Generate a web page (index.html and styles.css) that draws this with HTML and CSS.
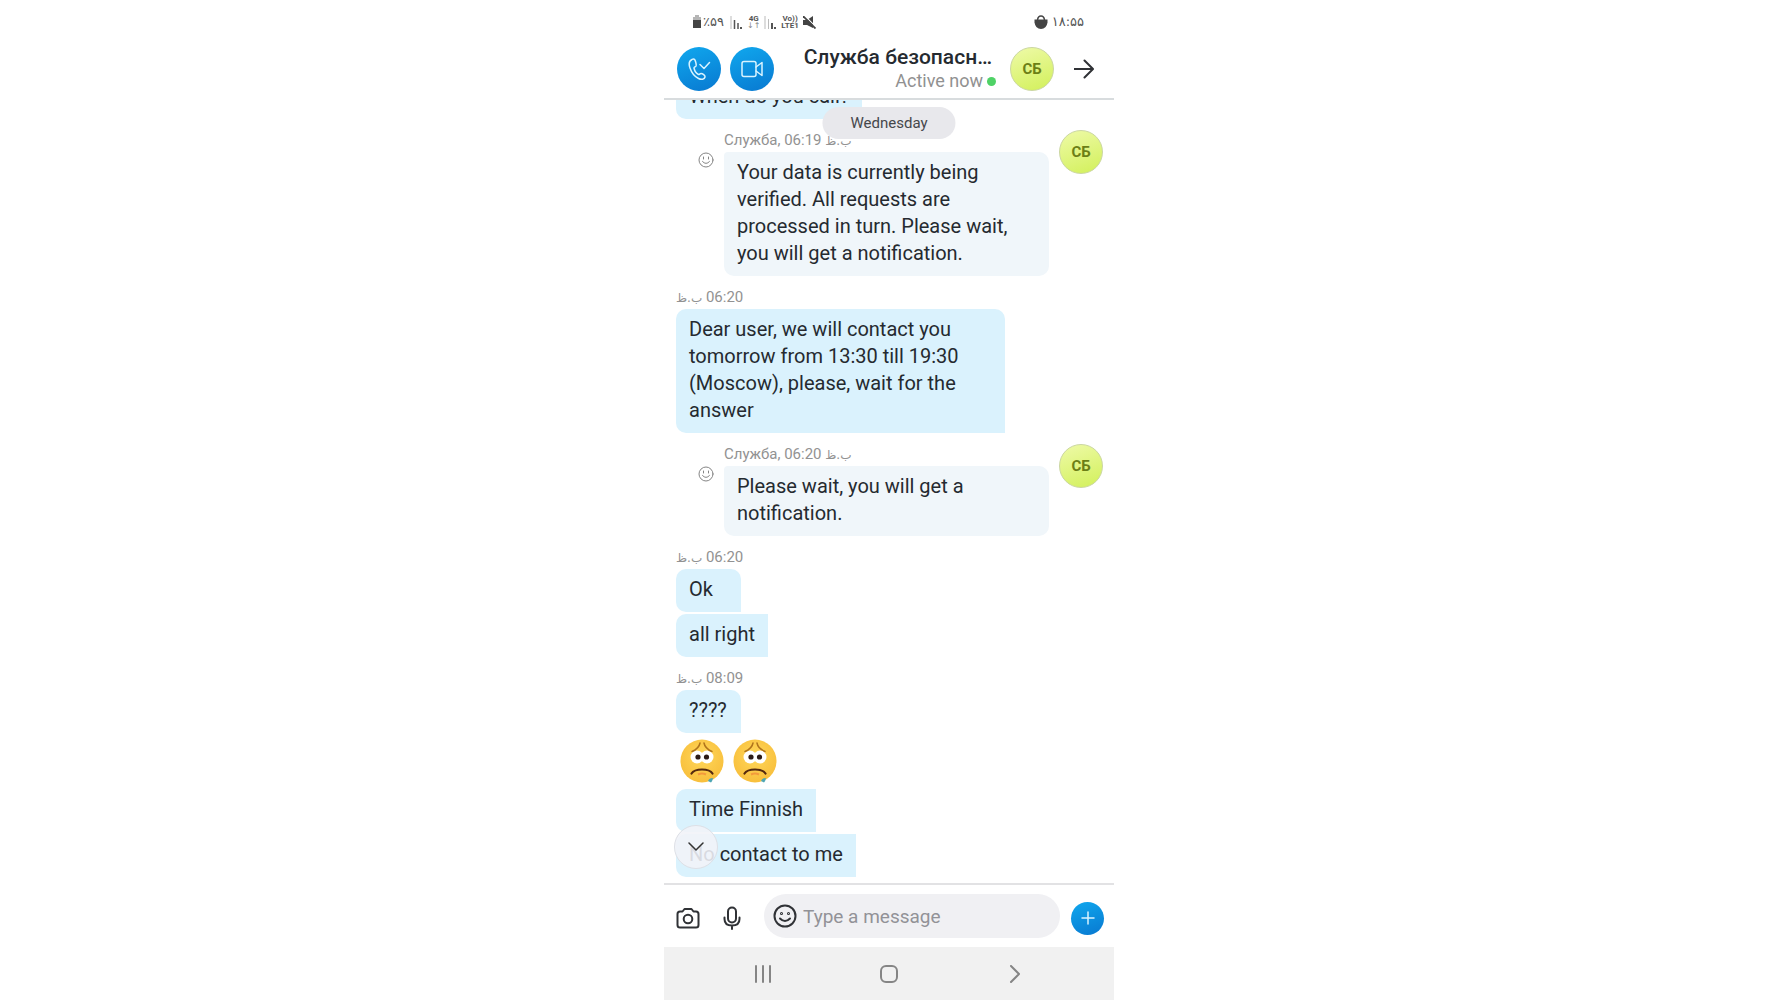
FILE: index.html
```html
<!DOCTYPE html>
<html lang="en">
<head>
  <meta charset="UTF-8">
  <meta name="viewport" content="width=device-width, initial-scale=1.0">
  <title>Chat</title>
  <link rel="stylesheet" href="styles.css">
</head>
<body>
  <div class="phone">
    <div class="status">
      <div class="status-side">
        <svg width="10" height="14" viewBox="0 0 10 14"><path d="M3 0h4v2h2v3H1V2h2z" fill="#b5b5b5"/><path d="M1 5h8v8H1z" fill="#444"/></svg>
        <span class="fa battery">٪۵۹</span>
        <svg class="signal" width="13" height="13" viewBox="0 0 13 13"><path d="M1 0v13" stroke="#bbb"/><path d="M4.500 4v9M8 7v6" stroke="#555" stroke-width="1.500"/><path d="M11 11v2" stroke="#555" stroke-width="2"/></svg>
        <span class="net"><b>4G</b><i>↓↑</i></span>
        <svg class="signal" width="13" height="13" viewBox="0 0 13 13"><path d="M1 0v13M4.500 3v10" stroke="#bbb"/><path d="M8 7v6M11 11v2" stroke="#555" stroke-width="2"/></svg>
        <span class="net"><b>Vo))</b><b>LTE1</b></span>
        <svg class="mute" width="13" height="13" viewBox="0 0 13 13"><path d="M0 4h4l6-4v12L4 9H0z" fill="#444"/><path d="M1-1l13 13" stroke="#fff" stroke-width="1.200"/><path d="M0 0l12.500 12.500" stroke="#444" stroke-width="1.800"/></svg>
      </div>
      <div class="status-side">
        <svg width="14" height="15" viewBox="0 0 14 15"><path d="M3.500 5Q4 1 7 1t3.500 4" fill="none" stroke="#444" stroke-width="1.500"/><path d="M.5 4.500h13v3Q12.500 14 7 14T.5 7.500z" fill="#444"/></svg>
        <span class="fa clock">۱۸:۵۵</span>
      </div>
    </div>

    <header class="header">
      <button class="round" aria-label="Call">
        <svg width="24" height="24" viewBox="0 0 24 24"><path d="M5 2.500C2 4 1.500 7 3 11c1.500 4.500 4.500 8.500 8.500 10.500 3 1.500 6 1 6.500-1.500.3-1.500-2.500-3.500-4-3.500-1.300 0-1.500 1.300-2.500 1-2-1-4-4-4.500-6.500 0-1 1.500-1 2-2C9.500 7.500 8.500 2 6.500 2Q5.700 2 5 2.500z"/><path d="M13 7.500l4 4 5.500-6"/></svg>
      </button>
      <button class="round" aria-label="Video call">
        <svg width="24" height="24" viewBox="0 0 24 24"><rect x="2" y="4.500" width="14" height="15" rx="2"/><path d="M16 10l6-4.500v13L16 14"/></svg>
      </button>
      <div class="contact">
        <div class="name">Служба безопасн…</div>
        <div class="presence">Active now<span class="dot"></span></div>
      </div>
      <div class="avatar">СБ</div>
      <button class="icon back" aria-label="Back">
        <svg width="20" height="20" viewBox="0 0 20 20"><path d="M0 10h18.500M10.500 1.500L19 10l-8.500 8.500"/></svg>
      </button>
    </header>

    <main class="chat">
      <div class="date">Wednesday</div>

      <div class="log">
        <div class="bubble">When do you call?</div>

        <div class="incoming">
          <button class="react" aria-label="React">
            <svg width="16" height="16" viewBox="0 0 16 16"><circle cx="8" cy="8" r="7"/><path d="M5.500 5v2M10.500 5v2M4.500 9.500Q8 13.500 11.500 9.500"/></svg>
          </button>
          <div class="body">
            <div class="meta">Служба, 06:19 <bdi class="pm">ب.ظ</bdi></div>
            <div class="bubble">Your data is currently being verified. All requests are processed in turn. Please wait, you will get a notification.</div>
          </div>
          <div class="avatar">СБ</div>
        </div>

        <div class="meta"><bdi class="pm">ب.ظ</bdi> 06:20</div>
        <div class="bubble first">Dear user, we will contact you tomorrow from 13:30 till 19:30 (Moscow), please, wait for the answer</div>

        <div class="incoming">
          <button class="react" aria-label="React">
            <svg width="16" height="16" viewBox="0 0 16 16"><circle cx="8" cy="8" r="7"/><path d="M5.500 5v2M10.500 5v2M4.500 9.500Q8 13.500 11.500 9.500"/></svg>
          </button>
          <div class="body">
            <div class="meta">Служба, 06:20 <bdi class="pm">ب.ظ</bdi></div>
            <div class="bubble">Please wait, you will get a notification.</div>
          </div>
          <div class="avatar">СБ</div>
        </div>

        <div class="meta"><bdi class="pm">ب.ظ</bdi> 06:20</div>
        <div class="bubble first">Ok</div>
        <div class="bubble">all right</div>

        <div class="meta"><bdi class="pm">ب.ظ</bdi> 08:09</div>
        <div class="bubble first">????</div>
        <div class="emojis">
          <svg width="44" height="44" viewBox="0 0 44 44"><use href="#sad"/></svg>
          <svg width="44" height="44" viewBox="0 0 44 44"><use href="#sad"/></svg>
        </div>
        <div class="bubble">Time Finnish</div>
        <div class="bubble">No contact to me</div>
      </div>

      <button class="scroll" aria-label="Scroll down">
        <svg width="16" height="10" viewBox="0 0 16 10"><path d="M1 1l7 7 7-7"/></svg>
      </button>
    </main>

    <footer class="compose">
      <button class="icon" aria-label="Camera">
        <svg width="24" height="24" viewBox="0 0 24 24"><path d="M4 5.500h2.500L8.500 3h7l2 2.500H20q2.500 0 2.500 2.500v11q0 2.500-2.500 2.500H4q-2.500 0-2.500-2.500V8Q1.500 5.500 4 5.500z"/><circle cx="12" cy="13" r="4.300"/></svg>
      </button>
      <button class="icon" aria-label="Voice message">
        <svg width="24" height="24" viewBox="0 0 24 24"><rect x="8" y="1.500" width="8" height="15" rx="4"/><path d="M4.500 11.500v1.500q0 6.500 7.500 6.500t7.500-6.500v-1.500M12 19.500V23"/></svg>
      </button>
      <div class="field">
        <button class="icon" aria-label="Emoji">
          <svg width="24" height="24" viewBox="0 0 24 24"><circle cx="12" cy="12" r="10.500"/><path d="M7 14.500Q12 19.500 17 14.500"/><circle cx="8.500" cy="9.500" r=".5"/><circle cx="15.500" cy="9.500" r=".5"/></svg>
        </button>
        <input type="text" placeholder="Type a message" aria-label="Type a message">
      </div>
      <button class="round small" aria-label="More">
        <svg width="14" height="14" viewBox="0 0 14 14"><path d="M7 1v12M1 7h12"/></svg>
      </button>
    </footer>

    <nav class="nav">
      <button aria-label="Recent apps"><svg width="18" height="18" viewBox="0 0 18 18"><path d="M2 1v16M9 1v16M16 1v16"/></svg></button>
      <button aria-label="Home"><svg width="18" height="18" viewBox="0 0 18 18"><rect x="1" y="1" width="16" height="16" rx="5"/></svg></button>
      <button aria-label="Back"><svg width="18" height="18" viewBox="0 0 18 18"><path d="M5 1l8 8-8 8"/></svg></button>
    </nav>
  </div>

  <svg class="defs" width="0" height="0" viewBox="0 0 44 44">
    <defs>
      <radialGradient id="skin" cx=".5" cy=".4" r=".6"><stop offset="0" stop-color="#ffd75a"/><stop offset="1" stop-color="#f8bf3c"/></radialGradient>
      <g id="sad">
        <circle cx="22" cy="22" r="21.500" fill="url(#skin)"/>
        <circle cx="17" cy="18" r="6.500" fill="#fff"/><circle cx="27" cy="18" r="6.500" fill="#fff"/>
        <circle cx="18" cy="18" r="2.600" fill="#2b1b17"/><circle cx="26.500" cy="18" r="2.600" fill="#2b1b17"/>
        <path d="M12 12.500Q19 9.500 20 4M32 12.500Q25 9.500 24 4" fill="none" stroke="#b0741c" stroke-width="1.500" stroke-linecap="round"/>
        <path d="M18 35.500q4-2 8 0" fill="none" stroke="#f39a3c" stroke-width="2"/>
        <path d="M11.500 34.500Q14 30.500 22 30.500T32.500 34.500" fill="none" stroke="#54290f" stroke-width="2.200" stroke-linecap="round"/>
        <path d="M28 42q1-3 5-3-.5 3-2 4.500z" fill="#4ea6b4"/>
      </g>
    </defs>
  </svg>
</body>
</html>
```

FILE: styles.css
```css
* { box-sizing: border-box; }
body { margin: 0; background: #fff; font-family: Roboto, "DejaVu Sans", sans-serif; color: #252a30; }
button { display: flex; align-items: center; justify-content: center; padding: 0; border: 0; background: none; cursor: pointer; }
svg { display: block; flex: none; }
button svg { fill: none; stroke: currentColor; stroke-width: 2; stroke-linecap: round; stroke-linejoin: round; }
.defs { position: absolute; }

.phone { display: flex; flex-direction: column; width: 100%; max-width: 450px; height: 100vh; margin: 0 auto; }

.status { display: flex; justify-content: space-between; align-items: center; height: 44px; padding: 0 30px 0 28px; color: #555; }
.status-side { display: flex; align-items: center; gap: 4px; }
.fa { font-family: "DejaVu Sans", sans-serif; font-size: 13px; line-height: 16px; }
.battery { margin: 0 2px 0 -3px; }
.net { display: flex; flex-direction: column; align-items: center; font-size: 8px; line-height: 7px; }
.net i { font-style: normal; color: #888; }

.header { display: flex; align-items: center; height: 56px; padding: 0 20px 4px 13px; border-bottom: 2px solid #d8dcde; }
.round { width: 44px; height: 44px; margin-right: 9px; border-radius: 50%; background: linear-gradient(160deg, #10a8ee, #0878d0); color: #d8f3ff; flex: none; }
.round svg { stroke-width: 1.500; }
.contact { flex: 1; min-width: 0; text-align: right; }
.name { font-size: 21px; font-weight: 500; line-height: 24px; white-space: nowrap; padding-right: 4px; }
.presence { display: flex; align-items: center; justify-content: flex-end; gap: 4px; font-size: 18px; line-height: 24px; color: #919191; }
.dot { width: 9px; height: 9px; border-radius: 50%; background: #4fd266; }
.avatar { display: flex; align-items: center; justify-content: center; flex: none; width: 44px; height: 44px; border: 1px solid #cbd7a0; border-radius: 50%; background: linear-gradient(160deg, #eefaa8, #d2f05a); color: #6c7f16; font-size: 15px; font-weight: 700; }
.header .avatar { margin: 0 20px 0 14px; }
.icon { color: #303236; flex: none; }

.chat { position: relative; flex: 1; min-height: 0; }
.log { display: flex; flex-direction: column; justify-content: flex-end; align-items: flex-start; height: 100%; padding: 0 11px 6px 12px; overflow: hidden; }
.bubble { flex: none; min-width: 65px; max-width: 329px; margin-top: 2px; padding: 7px 13px 9px; border-radius: 10px 0 0 10px; background: #daf2fd; font-size: 20px; line-height: 27px; }
.bubble.first { border-top-right-radius: 10px; }
.meta { flex: none; height: 20px; margin-top: 11px; font-size: 15px; line-height: 20px; color: #929292; white-space: nowrap; }
.pm { font-family: "DejaVu Sans", sans-serif; font-size: 12px; line-height: 12px; }
.incoming { display: flex; flex: none; align-self: stretch; margin-top: 11px; }
.incoming .meta { margin-top: 0; }
.incoming .body { flex: 1; margin: 0 10px; }
.incoming .bubble { max-width: none; border-radius: 4px 10px 10px 10px; background: #f0f6fa; }
.react { width: 16px; height: 16px; margin: 22px 0 0 22px; color: #858585; }
.react svg { stroke-width: 1; }
.emojis { display: flex; gap: 9px; margin: 6px 0 4px 4px; }
.date { position: absolute; top: 7px; left: 50%; transform: translateX(-50%); padding: 6px 28px; border-radius: 17px; background: #e8e8ec; font-size: 15px; line-height: 20px; color: #45474b; }
.scroll { position: absolute; left: 10px; bottom: 14px; width: 44px; height: 44px; border: 1px solid #dde0e6; border-radius: 50%; background: rgba(241, 243, 248, .88); color: #333; }
.scroll svg { stroke-width: 1.500; }

.compose { display: flex; align-items: center; gap: 20px; height: 64px; padding: 0 10px 0 12px; border-top: 2px solid #e2e2e4; }
.compose > .icon { padding-top: 4px; }
.field { display: flex; align-items: center; flex: 1; gap: 6px; min-width: 0; height: 44px; margin: 0 -9px 0 0; padding: 0 9px; border-radius: 22px; background: #f0f0f3; }
.field input { flex: 1; min-width: 0; padding: 0; border: 0; outline: 0; background: none; font: 19px Roboto, sans-serif; color: #252a30; }
.field input::placeholder { color: #929297; }
.round.small { width: 33px; height: 33px; margin: 4px 0 0; }
.nav { display: flex; justify-content: center; height: 53px; padding: 0 36px; background: #f1f1f1; color: #858585; }
.nav button { flex: 1; color: inherit; }
```
